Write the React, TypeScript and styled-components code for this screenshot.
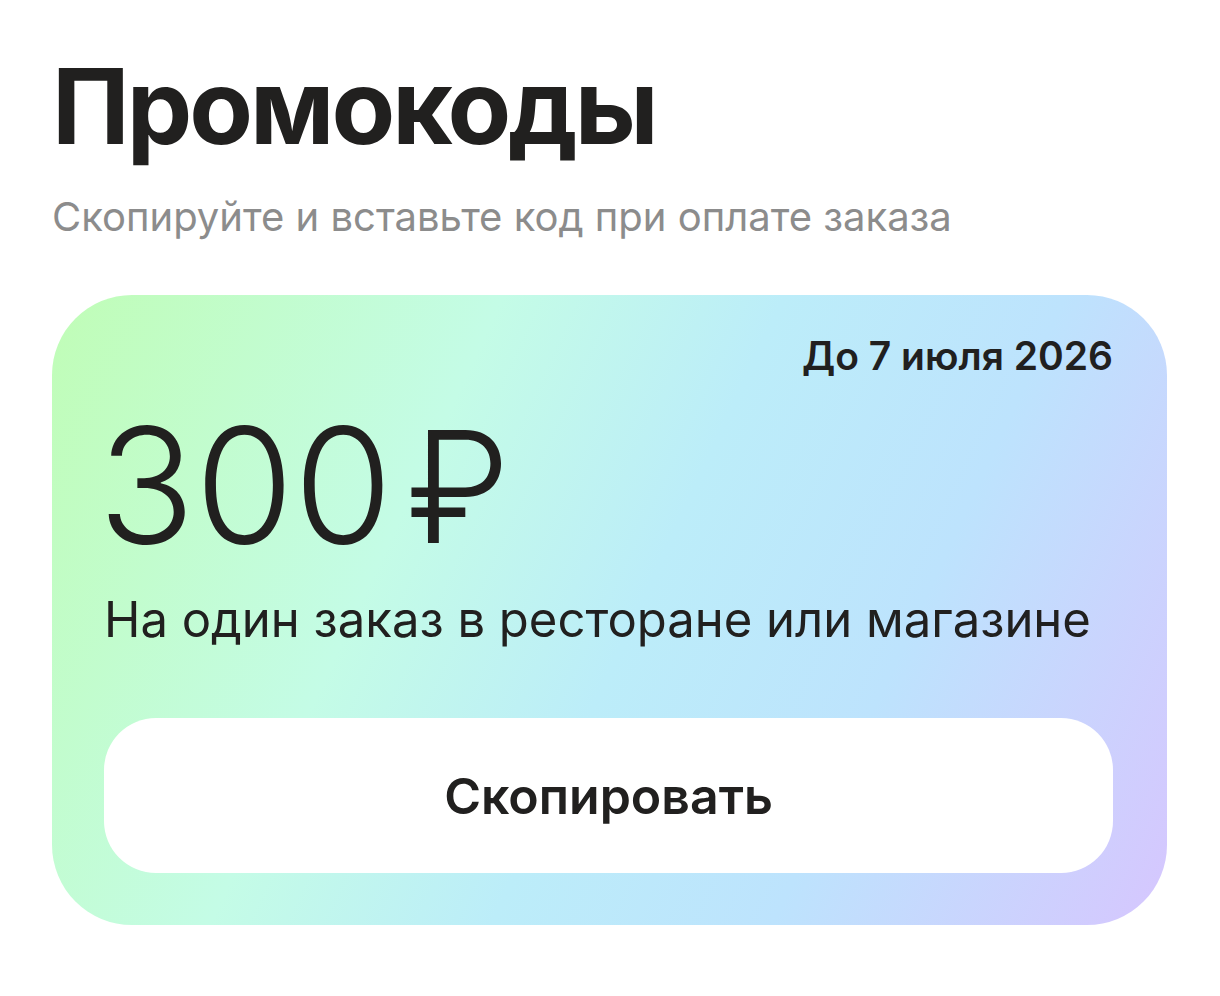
import React from 'react';
import styled, { createGlobalStyle } from 'styled-components';

const GlobalStyle = createGlobalStyle`
  html, body {
    margin: 0;
    padding: 0;
    background: #ffffff;
  }
  body {
    font-family: Inter, "Noto Sans", sans-serif;
    color: #21201f;
  }
`;

const Page = styled.div`
  padding: 44px 52px 0 52px;
  width: 1115px;
`;

const Title = styled.h1`
  margin: 0;
  font-size: 104px;
  font-weight: 700;
  letter-spacing: -3px;
  line-height: 1.2;
`;

const Subtitle = styled.p`
  margin: 24px 0 0 0;
  font-size: 40px;
  color: #8c8c8c;
  line-height: 1.2;
`;

const Card = styled.section`
  margin-top: 54px;
  border-radius: 80px;
  padding: 37px 54px 52px 52px;
  background: linear-gradient(115deg, #c0fdb6 0%, #c4fce6 32%, #bcedf9 52%, #bde3fd 72%, #d6c6fe 100%);
  display: flex;
  flex-direction: column;
`;

const Expires = styled.div`
  align-self: flex-end;
  font-size: 39px;
  font-weight: 600;
  line-height: 1.25;
`;

const Amount = styled.div`
  font-size: 160px;
  font-weight: 300;
  line-height: 1;
  margin: 24px 0 0 -6px;
`;

const Currency = styled.span`
  margin-left: 14px;
  font-size: 155px;
`;

const Note = styled.p`
  margin: 26px 0 0 0;
  font-size: 49px;
  line-height: 1.2;
`;

const CopyButton = styled.button`
  margin-top: 69px;
  height: 155px;
  border: none;
  border-radius: 52px;
  background: #ffffff;
  font-family: inherit;
  font-size: 50px;
  font-weight: 600;
  color: #21201f;
  cursor: pointer;
`;

export default function App() {
  return (
    <>
      <GlobalStyle />
      <Page>
        <Title>Промокоды</Title>
        <Subtitle>Скопируйте и вставьте код при оплате заказа</Subtitle>
        <Card>
          <Expires>До 7 июля 2026</Expires>
          <Amount>
            300<Currency>₽</Currency>
          </Amount>
          <Note>На один заказ в ресторане или магазине</Note>
          <CopyButton>Скопировать</CopyButton>
        </Card>
      </Page>
    </>
  );
}
